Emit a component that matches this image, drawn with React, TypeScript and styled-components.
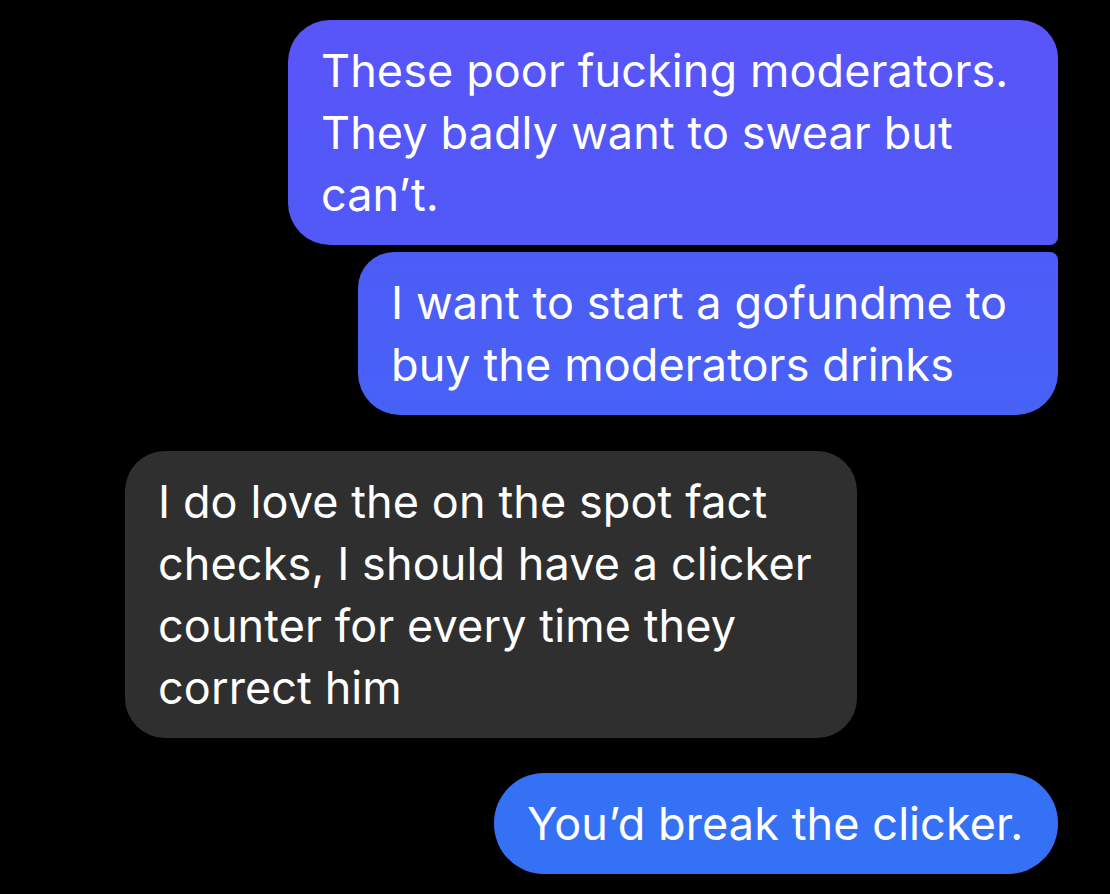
import React from 'react';
import styled, { createGlobalStyle } from 'styled-components';

const GlobalStyle = createGlobalStyle`
  html, body {
    margin: 0;
    padding: 0;
    background: #000;
  }
  body {
    font-family: Inter, 'Liberation Sans', sans-serif;
  }
`;

type Side = 'me' | 'them';

interface Message {
  side: Side;
  width: number;
  radius: string;
  bg: string;
  lines: string[];
  gapBefore: number;
}

const messages: Message[] = [
  {
    side: 'me',
    width: 770,
    radius: '42px 38px 8px 42px',
    bg: 'linear-gradient(180deg, #5955f9 0%, #5159f7 100%)',
    lines: ['These poor fucking moderators.', 'They badly want to swear but', 'can’t.'],
    gapBefore: 20,
  },
  {
    side: 'me',
    width: 700,
    radius: '36px 8px 42px 42px',
    bg: 'linear-gradient(180deg, #4d5cf6 0%, #4762f6 100%)',
    lines: ['I want to start a gofundme to', 'buy the moderators drinks'],
    gapBefore: 7,
  },
  {
    side: 'them',
    width: 732,
    radius: '40px',
    bg: '#2f2f2f',
    lines: [
      'I do love the on the spot fact',
      'checks, I should have a clicker',
      'counter for every time they',
      'correct him',
    ],
    gapBefore: 36,
  },
  {
    side: 'me',
    width: 564,
    radius: '50px',
    bg: '#3571f5',
    lines: ['You’d break the clicker.'],
    gapBefore: 35,
  },
];

const App: React.FC = () => {
  return (
    <>
      <GlobalStyle />
      <Thread>
        {messages.map((m, i) => (
          <Row key={i} $side={m.side} $gap={m.gapBefore}>
            <Bubble $width={m.width} $radius={m.radius} $bg={m.bg}>
              {m.lines.map((line, j) => (
                <Line key={j}>{line}</Line>
              ))}
            </Bubble>
          </Row>
        ))}
      </Thread>
    </>
  );
};

const Thread = styled.div`
  width: 1110px;
  height: 894px;
  box-sizing: border-box;
  padding: 0 52px 0 125px;
  display: flex;
  flex-direction: column;
  background: #000;
  overflow: hidden;
`;

const Row = styled.div<{ $side: Side; $gap: number }>`
  display: flex;
  justify-content: ${(p) => (p.$side === 'me' ? 'flex-end' : 'flex-start')};
  margin-top: ${(p) => p.$gap}px;
`;

const Bubble = styled.div<{ $width: number; $radius: string; $bg: string }>`
  width: ${(p) => p.$width}px;
  box-sizing: border-box;
  padding: 20px 20px 19px 33px;
  border-radius: ${(p) => p.$radius};
  background: ${(p) => p.$bg};
  color: #fff;
  font-size: 45px;
  line-height: 62px;
  font-weight: 400;
  letter-spacing: 0.1px;
`;

const Line = styled.div`
  white-space: nowrap;
`;

export default App;
